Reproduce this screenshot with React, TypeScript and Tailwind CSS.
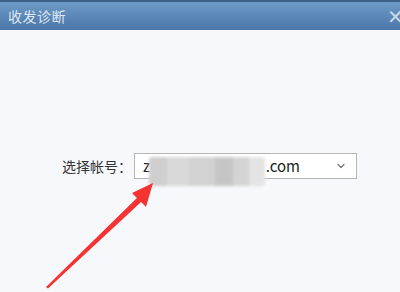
import { ChevronDown } from "lucide-react";

const font = { fontFamily: '"Microsoft YaHei", "Noto Sans CJK SC", "Liberation Sans", sans-serif' };

const App = () => {
  return (
    <div
      className="relative h-[292px] w-[400px] overflow-hidden bg-[#f7f8fc]"
      style={font}
    >
      {/* title bar */}
      <div className="flex h-[30px] items-center justify-between border-t-2 border-[#3c5f86] bg-gradient-to-b from-[#6e9ac7] to-[#4a77a8] pl-2 pr-0">
        <span className="text-[14px] tracking-[0.5px] text-[#dfe8f2]">收发诊断</span>
        <span className="-mr-[4px] text-[20px] leading-none text-[#c9d8e8]">✕</span>
      </div>

      {/* body */}
      <div className="flex flex-col pt-[123px]">
        <div className="flex items-center pl-[62px]">
          <span className="w-[72px] text-[14px] text-[#333]">选择帐号：</span>
          <div className="relative flex h-[26px] w-[223px] items-center border border-[#b5b5b5] bg-white pl-2 pr-[9px] shadow-[inset_0_1px_0_#fff]">
            <span className="text-[15px] text-[#222]">z</span>
            <span className="ml-auto mr-[35px] text-[15px] text-[#222]">.com</span>
            <ChevronDown className="h-3 w-3 text-[#777]" strokeWidth={2.5} />
            {/* blurred address */}
            <div className="absolute left-[14px] top-[3px] flex h-[29px] w-[116px] overflow-hidden rounded-[3px] blur-[1.5px]">
              <div className="w-[18px] bg-[#cfcfcf]" />
              <div className="w-[22px] bg-[#d9d9d9]" />
              <div className="w-[26px] bg-[#d2d2d2]" />
              <div className="w-[18px] bg-[#c6c6c6]" />
              <div className="w-[16px] bg-[#d4d4d4]" />
              <div className="w-[16px] bg-[#e4e4e4]" />
            </div>
          </div>
        </div>
      </div>

      {/* red annotation arrow */}
      <svg
        className="absolute left-0 top-0"
        width="400"
        height="292"
        viewBox="0 0 400 292"
      >
        <path
          d="M46 287 L136.9 197.9 L132 193 L153 183 L146 207 L141.1 202.1 L48 288.5 Z"
          fill="#f53333"
        />
      </svg>
    </div>
  );
};

export default App;
